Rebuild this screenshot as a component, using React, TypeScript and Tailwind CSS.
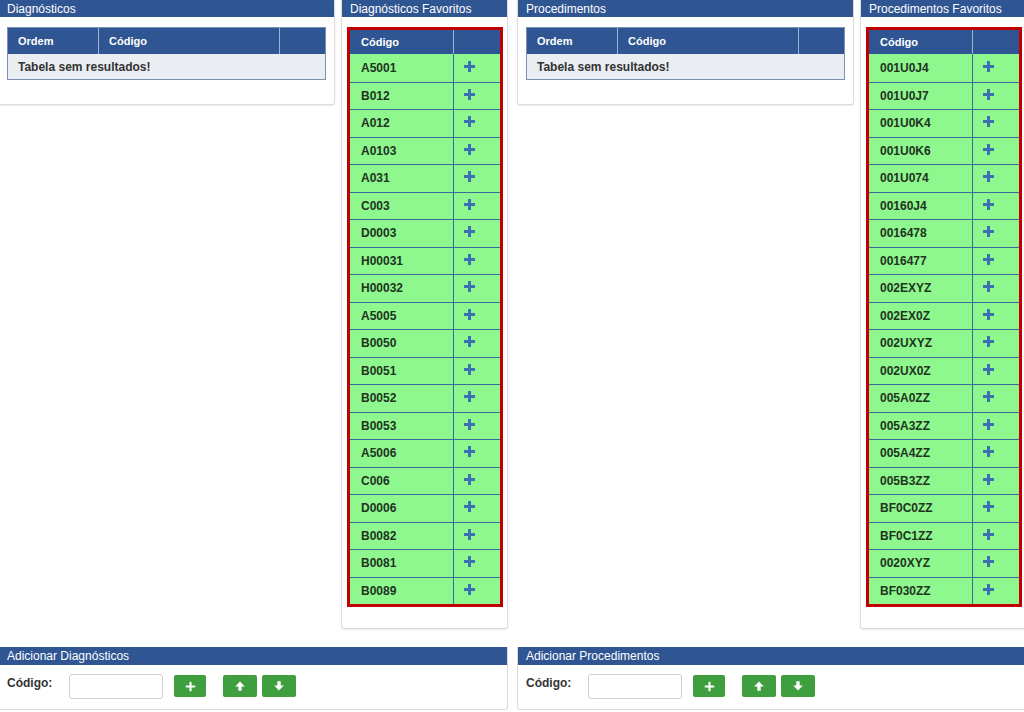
import { FaPlus } from "react-icons/fa";

const diagFav = [
  "A5001", "B012", "A012", "A0103", "A031", "C003", "D0003", "H00031", "H00032", "A5005",
  "B0050", "B0051", "B0052", "B0053", "A5006", "C006", "D0006", "B0082", "B0081", "B0089",
];

const procFav = [
  "001U0J4", "001U0J7", "001U0K4", "001U0K6", "001U074", "00160J4", "0016478", "0016477", "002EXYZ", "002EX0Z",
  "002UXYZ", "002UX0Z", "005A0ZZ", "005A3ZZ", "005A4ZZ", "005B3ZZ", "BF0C0ZZ", "BF0C1ZZ", "0020XYZ", "BF030ZZ",
];

function PanelHeader({ title }: { title: string }) {
  return (
    <div className="flex h-[17px] items-center bg-[#2f5592] px-[8px] text-[12px] leading-none text-white">
      {title}
    </div>
  );
}

function PlusMark() {
  return (
    <svg width="11" height="11" viewBox="0 0 11 11">
      <rect x="4" y="0" width="3" height="11" fill="#3d6fb3" />
      <rect x="0" y="4" width="11" height="3" fill="#3d6fb3" />
    </svg>
  );
}

function Arrow({ down }: { down?: boolean }) {
  return (
    <svg width="10" height="10" viewBox="0 0 10 10" className={down ? "rotate-180" : ""}>
      <path d="M5 0.5 L9.8 5.6 L6.7 5.6 L6.7 9.8 L3.3 9.8 L3.3 5.6 L0.2 5.6 Z" fill="white" />
    </svg>
  );
}

function EmptyTable() {
  return (
    <div className="border border-[#7c90b4]">
      <div className="flex h-[26px] bg-[#2f5592] text-[11px] font-bold text-white">
        <div className="flex w-[91px] items-center border-r border-[#9fb3d6] px-[10px]">Ordem</div>
        <div className="flex flex-1 items-center border-r border-[#9fb3d6] px-[10px]">Código</div>
        <div className="w-[45px]" />
      </div>
      <div className="flex h-[25px] items-center bg-[#eaedf1] px-[10px] text-[12px] font-bold text-[#333]">
        Tabela sem resultados!
      </div>
    </div>
  );
}

function MainPanel({ title }: { title: string }) {
  return (
    <div className="w-[337px] rounded-b-[3px] border-x border-b border-[#dcdcdc] bg-white shadow-[0_1px_2px_rgba(0,0,0,0.08)]">
      <PanelHeader title={title} />
      <div className="px-[8px] pt-[10px] pb-[24px]">
        <EmptyTable />
      </div>
    </div>
  );
}

function FavPanel({ title, codes }: { title: string; codes: string[] }) {
  return (
    <div className="w-[167px] rounded-b-[3px] border-x border-b border-[#dcdcdc] bg-white shadow-[0_1px_2px_rgba(0,0,0,0.08)]">
      <PanelHeader title={title} />
      <div className="pt-[10px] pr-[4px] pb-[21px] pl-[5px]">
        <div className="border-[3px] border-[#c00000]">
          <div className="flex h-[24px] bg-[#2f5592] text-[11px] font-bold text-white">
            <div className="flex w-[104px] items-center border-r border-[#9fb3d6] px-[11px]">Código</div>
            <div className="flex-1" />
          </div>
          {codes.map((c, i) => (
            <div
              key={c}
              className={`flex h-[27.5px] bg-[#8ef78e] text-[12px] font-bold text-[#1f331f] ${i > 0 ? "border-t border-[#3b6a9e]" : ""}`}
            >
              <div className="flex w-[104px] items-center border-r border-[#3b6a9e] px-[11px]">{c}</div>
              <div className="flex flex-1 items-center pb-[3px] pl-[10px]">
                <PlusMark />
              </div>
            </div>
          ))}
        </div>
      </div>
    </div>
  );
}

function GreenButton({ children, w }: { children: React.ReactNode; w: string }) {
  return (
    <button className={`flex h-[22px] ${w} items-center justify-center rounded-[2px] bg-[#3f9f3f] text-white`}>
      {children}
    </button>
  );
}

function AddPanel({ title }: { title: string }) {
  return (
    <div className="flex-1 rounded-b-[3px] border-x border-b border-[#dcdcdc] bg-white">
      <div className="flex h-[18px] items-center bg-[#2f5592] px-[8px] text-[12px] leading-none text-white">
        {title}
      </div>
      <div className="flex h-[44px] items-center px-[8px] pb-[2px]">
        <span className="w-[62px] pb-[6px] text-[12px] font-bold text-[#333]">Código:</span>
        <input className="h-[25px] w-[94px] rounded-[3px] border border-[#cfcfcf] bg-white" />
        <div className="ml-[11px]">
          <GreenButton w="w-[32px]">
            <FaPlus size={11} />
          </GreenButton>
        </div>
        <div className="ml-[17px] flex gap-[5px]">
          <GreenButton w="w-[34px]">
            <Arrow />
          </GreenButton>
          <GreenButton w="w-[34px]">
            <Arrow down />
          </GreenButton>
        </div>
      </div>
    </div>
  );
}

export default function App() {
  return (
    <div
      className="h-[712px] w-[1024px] overflow-hidden bg-white"
      style={{ fontFamily: '"Liberation Sans", Arial, sans-serif' }}
    >
      <div className="-ml-[2px] w-[1030px]">
        <div className="flex gap-[9px]">
          <div className="flex items-start gap-[6px]">
            <MainPanel title="Diagnósticos" />
            <FavPanel title="Diagnósticos Favoritos" codes={diagFav} />
          </div>
          <div className="flex items-start gap-[6px]">
            <MainPanel title="Procedimentos" />
            <FavPanel title="Procedimentos Favoritos" codes={procFav} />
          </div>
        </div>
        <div className="mt-[18px] flex gap-[9px]">
          <div className="flex w-[510px]">
            <AddPanel title="Adicionar Diagnósticos" />
          </div>
          <div className="flex w-[510px]">
            <AddPanel title="Adicionar Procedimentos" />
          </div>
        </div>
      </div>
    </div>
  );
}
